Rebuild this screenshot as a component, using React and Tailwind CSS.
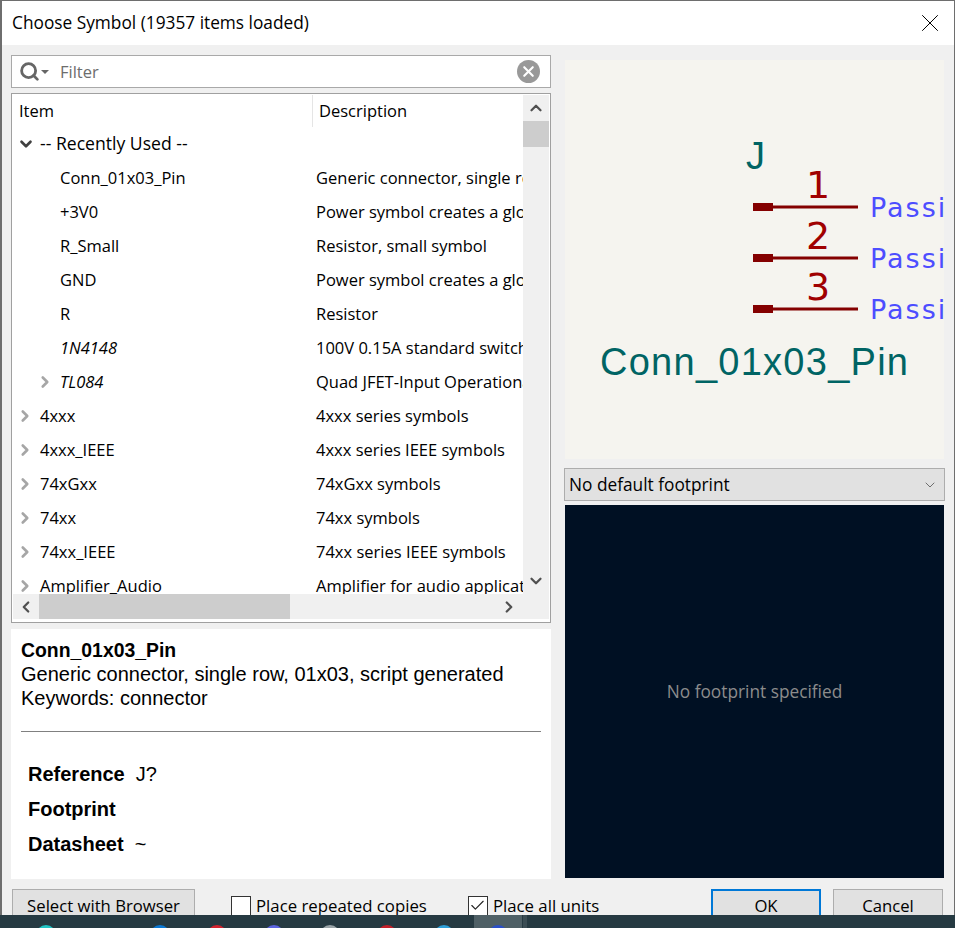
import { ChevronDown, ChevronLeft, ChevronRight, ChevronUp, Check, Search, X } from "lucide-react";

const recent = [
  { name: "Conn_01x03_Pin", desc: "Generic connector, single row, 01x03, script generated" },
  { name: "+3V0", desc: "Power symbol creates a global label with name +3V0" },
  { name: "R_Small", desc: "Resistor, small symbol" },
  { name: "GND", desc: "Power symbol creates a global label with name GND" },
  { name: "R", desc: "Resistor" },
  { name: "1N4148", desc: "100V 0.15A standard switching diode", italic: true },
  { name: "TL084", desc: "Quad JFET-Input Operational Amplifier", italic: true, arrow: true },
];

const libs = [
  { name: "4xxx", desc: "4xxx series symbols" },
  { name: "4xxx_IEEE", desc: "4xxx series IEEE symbols" },
  { name: "74xGxx", desc: "74xGxx symbols" },
  { name: "74xx", desc: "74xx symbols" },
  { name: "74xx_IEEE", desc: "74xx series IEEE symbols" },
  { name: "Amplifier_Audio", desc: "Amplifier for audio applications" },
];

const pins = [
  { num: "1", y: 147, text: 138, label: 157 },
  { num: "2", y: 198, text: 189, label: 208 },
  { num: "3", y: 249, text: 240, label: 259 },
];

function TreeRow({ item, depth }) {
  return (
    <div className="flex h-[34px] shrink-0 items-center">
      <div className="flex w-[301px] shrink-0 items-center overflow-hidden">
        {depth === 1 ? <span className="w-[20px] shrink-0" /> : null}
        {item.arrow || depth === 0 ? (
          <ChevronRight size={18} strokeWidth={3.5} className="ml-[3px] mr-[6px] shrink-0 text-[#a6a6a6]" />
        ) : (
          <span className="w-[27px] shrink-0" />
        )}
        <span className={item.italic ? "italic" : ""}>{item.name}</span>
      </div>
      <div className="w-[209px] shrink-0 overflow-hidden whitespace-nowrap pl-[2px]">{item.desc}</div>
    </div>
  );
}

function Schematic() {
  return (
    <svg viewBox="1 0 379 399" className="block h-[399px] w-[379px]" style={{ fontFamily: "'DejaVu Sans', sans-serif" }}>
      <text x="182" y="109" fontSize="38" fill="#006464" style={{ fontFamily: "'Liberation Sans', sans-serif" }}>J</text>
      {pins.map((p) => (
        <g key={p.num}>
          <rect x="189" y={p.y - 4} width="20" height="8" fill="#840000" />
          <rect x="209" y={p.y - 1.5} width="85" height="3" fill="#840000" />
          <text x="254" y={p.text} textAnchor="middle" fontSize="38" fill="#a00000">{p.num}</text>
          <text x="306" y={p.label} fontSize="27" letterSpacing="2" fill="#4d4dff">Passive</text>
        </g>
      ))}
      <text x="36" y="315" fontSize="38" fill="#006464" textLength="308" style={{ fontFamily: "'Liberation Sans', sans-serif" }}>Conn_01x03_Pin</text>
    </svg>
  );
}

function Button({ label, focused, className }) {
  return (
    <div
      className={`flex h-[33px] shrink-0 items-center justify-center bg-[#e1e1e1] text-[16.7px] ${
        focused ? "border-2 border-[#0078d7]" : "border border-[#adadad]"
      } ${className}`}
    >
      {label}
    </div>
  );
}

function CheckItem({ label, checked, className }) {
  return (
    <div className={`flex items-center gap-[5px] text-[16.8px] ${className}`}>
      <span className="flex h-[20px] w-[20px] items-center justify-center border border-[#333] bg-white">
        {checked ? <Check size={17} strokeWidth={1.6} className="text-[#222]" /> : null}
      </span>
      <span>{label}</span>
    </div>
  );
}

function Slot({ color }) {
  return (
    <div className="flex w-[56.8px] shrink-0 justify-center">
      {color ? <span className={`mt-[10px] h-[20px] w-[20px] rounded-full ${color}`} /> : null}
    </div>
  );
}

export default function App() {
  return (
    <div
      className="flex h-[928px] w-[955px] flex-col overflow-hidden bg-[#263a42] text-[16.5px] text-black"
      style={{ fontFamily: "'Open Sans', sans-serif" }}
    >
      <div className="flex h-[915px] shrink-0 flex-col overflow-hidden border-t border-r border-l-2 border-[#6e6e6e] bg-[#f0f0f0]">
        <header className="flex h-[44px] shrink-0 items-center justify-between bg-white pl-[10px] pr-[9px] text-[17.3px]">
          <span>Choose Symbol (19357 items loaded)</span>
          <X size={30} strokeWidth={0.8} className="text-black" />
        </header>

        <div className="flex h-[834px] shrink-0 pt-[10px]">
          {/* left column */}
          <div className="ml-[9px] flex w-[540px] shrink-0 flex-col">
            <div className="flex h-[33px] shrink-0 items-center border border-[#a9a9a9] bg-white pl-[7px] pr-[10px]">
              <Search size={21} strokeWidth={3.2} className="text-[#666]" />
              <span className="ml-[1px] h-0 w-0 border-x-[4px] border-t-[4px] border-x-transparent border-t-[#666]" />
              <span className="ml-[11px] pt-[1px] text-[#6d6d6d]">Filter</span>
              <span className="ml-auto flex h-[23px] w-[23px] items-center justify-center rounded-full bg-[#999]">
                <X size={17} strokeWidth={3} className="text-white" />
              </span>
            </div>

            <div className="mt-[5px] flex h-[530px] shrink-0 flex-col border border-[#a0a0a0] bg-white p-px">
              <div className="flex h-[499px] shrink-0">
                <div className="w-[510px] shrink-0 overflow-hidden">
                  <div className="flex h-[32px] items-center">
                    <span className="w-[299px] shrink-0 pl-[6px]">Item</span>
                    <span className="h-full border-l border-[#e5e5e5] pl-[6px] leading-[32px]">Description</span>
                  </div>
                  <div className="flex h-[34px] items-center pb-px">
                    <ChevronDown size={18} strokeWidth={3.5} className="ml-[4px] mr-[5px] shrink-0 text-[#404040]" />
                    <span className="text-[17.6px]">-- Recently Used --</span>
                  </div>
                  {recent.map((r) => (
                    <TreeRow key={r.name} item={r} depth={1} />
                  ))}
                  {libs.map((l) => (
                    <TreeRow key={l.name} item={l} depth={0} />
                  ))}
                </div>
                <div className="flex w-[26px] shrink-0 flex-col bg-[#f0f0f0]">
                  <div className="flex h-[26px] items-center justify-center">
                    <ChevronUp size={18} strokeWidth={3} className="text-[#505050]" />
                  </div>
                  <div className="h-[26px] bg-[#cdcdcd]" />
                  <div className="mt-auto flex h-[26px] items-center justify-center">
                    <ChevronDown size={18} strokeWidth={3} className="text-[#505050]" />
                  </div>
                </div>
              </div>
              <div className="flex h-[25px] shrink-0 bg-[#f0f0f0]">
                <div className="flex w-[26px] items-center justify-center">
                  <ChevronLeft size={18} strokeWidth={3} className="text-[#505050]" />
                </div>
                <div className="w-[251px] bg-[#cdcdcd]" />
                <div className="ml-[206px] flex w-[26px] items-center justify-center">
                  <ChevronRight size={18} strokeWidth={3} className="text-[#505050]" />
                </div>
              </div>
            </div>

            <div
              className="mt-[6px] flex h-[250px] shrink-0 flex-col bg-white px-[10px] text-[20px] leading-[24px]"
              style={{ fontFamily: "'Liberation Sans', sans-serif" }}
            >
              <div className="mt-[9px] text-[19.4px] font-bold">Conn_01x03_Pin</div>
              <div>Generic connector, single row, 01x03, script generated</div>
              <div>Keywords: connector</div>
              <div className="mt-[21px] h-px bg-[#808080]" />
              <div className="mt-[30px] flex flex-col gap-[11px] pl-[7px]">
                <div><b>Reference</b>&nbsp; J?</div>
                <div><b>Footprint</b></div>
                <div><b>Datasheet</b>&nbsp; ~</div>
              </div>
            </div>
          </div>

          {/* right column */}
          <div className="ml-[13px] flex w-[381px] shrink-0 flex-col pt-[5px]">
            <div className="ml-px h-[399px] w-[379px] shrink-0 overflow-hidden bg-[#f5f4ef]">
              <Schematic />
            </div>
            <div className="mt-[9px] flex h-[33px] shrink-0 items-center justify-between border border-[#adadad] bg-[#e1e1e1] pl-[4px] pr-[6px] text-[17.3px]">
              <span className="pt-[1px]">No default footprint</span>
              <ChevronDown size={16} strokeWidth={1} className="text-[#333]" />
            </div>
            <div className="ml-px mt-[4px] flex h-[373px] w-[379px] shrink-0 items-center justify-center bg-[#001023] text-[17.3px] text-[#8c8c8c]">
              No footprint specified
            </div>
          </div>
        </div>

        <footer className="mt-[10px] flex shrink-0 items-start pl-[10px]">
          <Button label="Select with Browser" className="w-[183px]" />
          <CheckItem label="Place repeated copies" className="ml-[36px] mt-[4px]" />
          <CheckItem label="Place all units" checked className="ml-[41px] mt-[4px]" />
          <Button label="OK" focused className="ml-auto w-[110px]" />
          <Button label="Cancel" className="ml-[12px] mr-[11px] w-[110px]" />
        </footer>
      </div>

      {/* taskbar, only the top of the icons shows */}
      <div className="flex h-[13px] shrink-0 overflow-hidden pl-[18px]">
        <Slot color="bg-[#22c4c4]" />
        <Slot />
        <Slot color="bg-[#0a78d4]" />
        <Slot color="bg-[#d3232f]" />
        <Slot color="bg-[#5c64e0]" />
        <Slot color="bg-[#9aa4a8]" />
        <Slot color="bg-[#c4202a]" />
        <Slot color="bg-[#2d9fd8]" />
        <div className="ml-[2px] flex w-[48px] justify-center bg-[#4f6066]">
          <span className="mt-[10px] h-[20px] w-[20px] rounded-full bg-[#2a4fc8]" />
        </div>
        <div className="ml-[1px] w-[4px] bg-[#3b4d54]" />
      </div>
    </div>
  );
}
